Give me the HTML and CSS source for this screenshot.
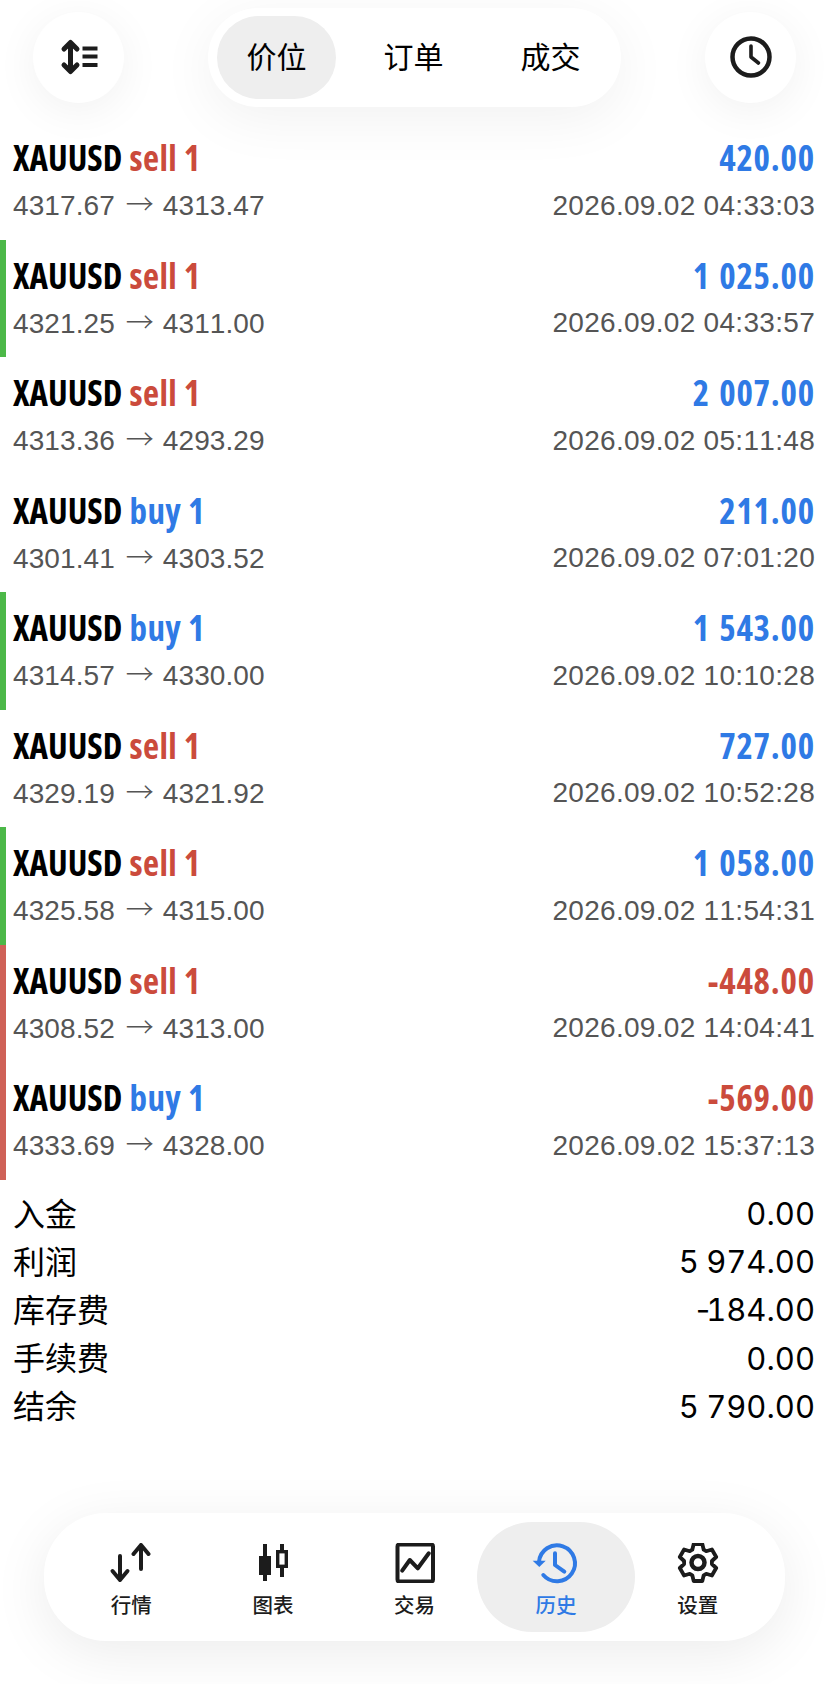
FILE: index.html
```html
<!DOCTYPE html>
<html lang="zh">
<head>
  <meta charset="utf-8">
  <title>历史</title>
  <link rel="stylesheet" href="styles.css">
</head>
<body>
  <header class="topbar">
    <button class="round-btn">
      <svg width="40" height="40" viewBox="0 0 40 40"><path d="M11.5 6 V34 M5 12 L11.5 5.5 L18 12 M5 28 L11.5 34.5 L18 28" fill="none" stroke="#1c1c1c" stroke-width="5" stroke-linecap="round" stroke-linejoin="round"/><path d="M23.5 11.5 H38.5 M23.5 19.5 H38.5 M23.5 28 H38.5" stroke="#1c1c1c" stroke-width="4" fill="none"/></svg>
    </button>
    <nav class="tabs">
      <a class="tab active">价位</a>
      <a class="tab">订单</a>
      <a class="tab">成交</a>
    </nav>
    <button class="round-btn">
      <svg width="44" height="44" viewBox="0 0 44 44"><circle cx="22" cy="22" r="18.5" fill="none" stroke="#1c1c1c" stroke-width="4.5"/><path d="M22 11 V22 L29.5 28" fill="none" stroke="#1c1c1c" stroke-width="3.6" stroke-linecap="round" stroke-linejoin="round"/></svg>
    </button>
  </header>

  <main>
    <div class="deals">
      <div class="deal"><div class="title"><b>XAUUSD</b> <span class="sell">sell 1</span></div><div class="amount plus">420.00</div><div class="sub">4317.67 <span class="arrow">→</span> 4313.47</div><div class="sub time">2026.09.02 04:33:03</div></div>
      <div class="deal win"><div class="title"><b>XAUUSD</b> <span class="sell">sell 1</span></div><div class="amount plus">1 025.00</div><div class="sub">4321.25 <span class="arrow">→</span> 4311.00</div><div class="sub time">2026.09.02 04:33:57</div></div>
      <div class="deal"><div class="title"><b>XAUUSD</b> <span class="sell">sell 1</span></div><div class="amount plus">2 007.00</div><div class="sub">4313.36 <span class="arrow">→</span> 4293.29</div><div class="sub time">2026.09.02 05:11:48</div></div>
      <div class="deal"><div class="title"><b>XAUUSD</b> <span class="buy">buy 1</span></div><div class="amount plus">211.00</div><div class="sub">4301.41 <span class="arrow">→</span> 4303.52</div><div class="sub time">2026.09.02 07:01:20</div></div>
      <div class="deal win"><div class="title"><b>XAUUSD</b> <span class="buy">buy 1</span></div><div class="amount plus">1 543.00</div><div class="sub">4314.57 <span class="arrow">→</span> 4330.00</div><div class="sub time">2026.09.02 10:10:28</div></div>
      <div class="deal"><div class="title"><b>XAUUSD</b> <span class="sell">sell 1</span></div><div class="amount plus">727.00</div><div class="sub">4329.19 <span class="arrow">→</span> 4321.92</div><div class="sub time">2026.09.02 10:52:28</div></div>
      <div class="deal win"><div class="title"><b>XAUUSD</b> <span class="sell">sell 1</span></div><div class="amount plus">1 058.00</div><div class="sub">4325.58 <span class="arrow">→</span> 4315.00</div><div class="sub time">2026.09.02 11:54:31</div></div>
      <div class="deal loss"><div class="title"><b>XAUUSD</b> <span class="sell">sell 1</span></div><div class="amount minus">-448.00</div><div class="sub">4308.52 <span class="arrow">→</span> 4313.00</div><div class="sub time">2026.09.02 14:04:41</div></div>
      <div class="deal loss"><div class="title"><b>XAUUSD</b> <span class="buy">buy 1</span></div><div class="amount minus">-569.00</div><div class="sub">4333.69 <span class="arrow">→</span> 4328.00</div><div class="sub time">2026.09.02 15:37:13</div></div>
    </div>

    <dl class="summary">
      <div class="sum-row"><dt>入金</dt><dd>0.00</dd></div>
      <div class="sum-row"><dt>利润</dt><dd>5 974.00</dd></div>
      <div class="sum-row"><dt>库存费</dt><dd><span class="neg">-</span>184.00</dd></div>
      <div class="sum-row"><dt>手续费</dt><dd>0.00</dd></div>
      <div class="sum-row"><dt>结余</dt><dd>5 790.00</dd></div>
    </dl>
  </main>

  <footer class="bottombar">
    <nav class="dock">
      <a class="dock-item">
        <svg width="44" height="40" viewBox="0 0 44 40"><path d="M11 13 V37 M3.5 28 L11 37 L18.5 28" fill="none" stroke="#1c1c1c" stroke-width="4" stroke-linecap="round" stroke-linejoin="round"/><path d="M32 26 V2 M24.5 11 L32 2 L39.5 11" fill="none" stroke="#1c1c1c" stroke-width="4" stroke-linecap="round" stroke-linejoin="round"/></svg>
        <span>行情</span>
      </a>
      <a class="dock-item">
        <svg width="44" height="40" viewBox="0 0 44 40"><path d="M14 1 V38" stroke="#1c1c1c" stroke-width="4"/><rect x="8" y="13" width="12" height="19" fill="#1c1c1c"/><path d="M31 1 V34" stroke="#1c1c1c" stroke-width="4"/><rect x="26.7" y="8.7" width="8.6" height="14.6" fill="#fff" stroke="#1c1c1c" stroke-width="3.4"/></svg>
        <span>图表</span>
      </a>
      <a class="dock-item">
        <svg width="44" height="40" viewBox="0 0 44 40"><rect x="4.5" y="1.5" width="35.5" height="37" rx="2" fill="none" stroke="#1c1c1c" stroke-width="4"/><path d="M9.2 27.7 L16.8 17 L24.8 25.3 L35.8 10.3" fill="none" stroke="#1c1c1c" stroke-width="4" stroke-linecap="round" stroke-linejoin="round"/></svg>
        <span>交易</span>
      </a>
      <a class="dock-item active">
        <svg class="over" width="44" height="40" viewBox="0 0 44 40"><path d="M5 19 A18 18 0 1 1 9.3 32" fill="none" stroke="#2f7ae5" stroke-width="4" stroke-linecap="round"/><path d="M-1.3 17.7 H11.7 L5.3 24 Z" fill="#2f7ae5"/><path d="M21 10.3 V22 L30.3 28.7" fill="none" stroke="#2f7ae5" stroke-width="4" stroke-linecap="round" stroke-linejoin="round"/></svg>
        <span>历史</span>
      </a>
      <a class="dock-item">
        <svg width="44" height="40" viewBox="0 0 44 40"><circle cx="22" cy="19.5" r="6.5" fill="none" stroke="#1c1c1c" stroke-width="4.5"/><path d="M16.3 6.7 L17.7 1 H26.3 L27.7 6.7 L30.2 8.2 L35.9 6.5 L40.2 14 L35.9 18 V21 L40.2 25 L35.9 32.5 L30.2 30.8 L27.7 32.3 L26.3 38 H17.7 L16.3 32.3 L13.8 30.8 L8.1 32.5 L3.8 25 L8.1 21 V18 L3.8 14 L8.1 6.5 L13.8 8.2 Z" fill="none" stroke="#1c1c1c" stroke-width="3.8" stroke-linejoin="round"/></svg>
        <span>设置</span>
      </a>
    </nav>
  </footer>
</body>
</html>
```

FILE: styles.css
```css
html, body {
  margin: 0;
  padding: 0;
  background: #fff;
}
body {
  width: 828px;
  height: 1684px;
  display: flex;
  flex-direction: column;
  font-family: "Liberation Sans", "Noto Sans CJK SC", sans-serif;
  font-kerning: none;
  color: #000;
  overflow: hidden;
}
a {
  display: block;
}

/* top bar */
.topbar {
  display: flex;
  justify-content: space-between;
  align-items: center;
  height: 114px;
  padding: 0 32px 0 33px;
  margin-bottom: 8px;
}
.round-btn {
  width: 91px;
  height: 91px;
  padding: 0;
  border: 0;
  border-radius: 50%;
  background: #fff;
  box-shadow: 0 8px 44px rgba(0, 0, 0, 0.06);
  display: flex;
  align-items: center;
  justify-content: center;
}
.tabs {
  display: flex;
  gap: 18px;
  padding: 8px 11px 8px 9px;
  border-radius: 50px;
  background: #fff;
  box-shadow: 0 12px 56px rgba(0, 0, 0, 0.06);
}
.tab {
  width: 119px;
  height: 83px;
  line-height: 83px;
  text-align: center;
  font-size: 30px;
  border-radius: 42px;
}
.tab.active {
  background: #eeeeee;
}

/* deals */
.deal {
  display: grid;
  grid-template-columns: 1fr auto;
  grid-template-rows: 54px 41px;
  align-items: center;
  height: 117.5px;
  box-sizing: border-box;
  padding: 9px 13px 0 7px;
  border-left: 6px solid transparent;
}
.deal.win {
  border-left-color: #4cb848;
}
.deal.loss {
  border-left-color: #cf6157;
}
.title, .amount {
  font-family: "Open Sans", "Liberation Sans", sans-serif;
  font-weight: 700;
  font-stretch: 75%;
  font-size: 35px;
  line-height: 40px;
}
.title b {
  font-weight: 700;
  margin-right: 1px;
}
.sell, .buy {
  letter-spacing: 0.4px;
}
.sell {
  color: #cb4b3c;
}
.buy, .plus {
  color: #2f7ae5;
}
.minus {
  color: #cb4b3c;
}
.amount {
  text-align: right;
  letter-spacing: 0.8px;
  word-spacing: 2px;
}
.sub {
  font-size: 28px;
  letter-spacing: 0.1px;
  color: #555;
}
.arrow {
  font-family: "Noto Sans CJK SC", sans-serif;
  font-weight: 300;
  font-size: 28px;
  line-height: 1;
  margin: 0 1px 0 3px;
}
.time {
  text-align: right;
  letter-spacing: 0.3px;
}

/* totals */
.summary {
  margin: 9px 0 0;
  padding: 0 13px;
}
.sum-row {
  display: flex;
  justify-content: space-between;
  align-items: center;
  height: 48.2px;
}
dt {
  font-size: 32px;
  margin-bottom: 2px;
}
dd {
  margin: 2px 0 0;
  font-family: Inter, "Liberation Sans", sans-serif;
  font-variant-numeric: tabular-nums;
  font-size: 31px;
  word-spacing: -1px;
}
.neg {
  letter-spacing: -7px;
}

/* bottom dock */
.bottombar {
  margin-top: auto;
  padding: 0 43px 43px 44px;
}
.dock {
  display: grid;
  grid-template-columns: repeat(5, 141.6px);
  justify-content: center;
  align-items: center;
  height: 128px;
  border-radius: 62px;
  background: #fff;
  box-shadow: 0 12px 56px rgba(0, 0, 0, 0.08);
}
.dock-item {
  display: flex;
  flex-direction: column;
  align-items: center;
  justify-content: center;
  gap: 10px;
  height: 110px;
  box-sizing: border-box;
  padding-top: 8px;
  font-size: 20.5px;
  line-height: 26px;
  font-weight: 500;
  color: #1c1c1c;
}
.dock-item.active {
  color: #2f7ae5;
  background: #eeeeee;
  width: 158px;
  justify-self: center;
  border-radius: 55px;
}
.over {
  overflow: visible;
}
```
